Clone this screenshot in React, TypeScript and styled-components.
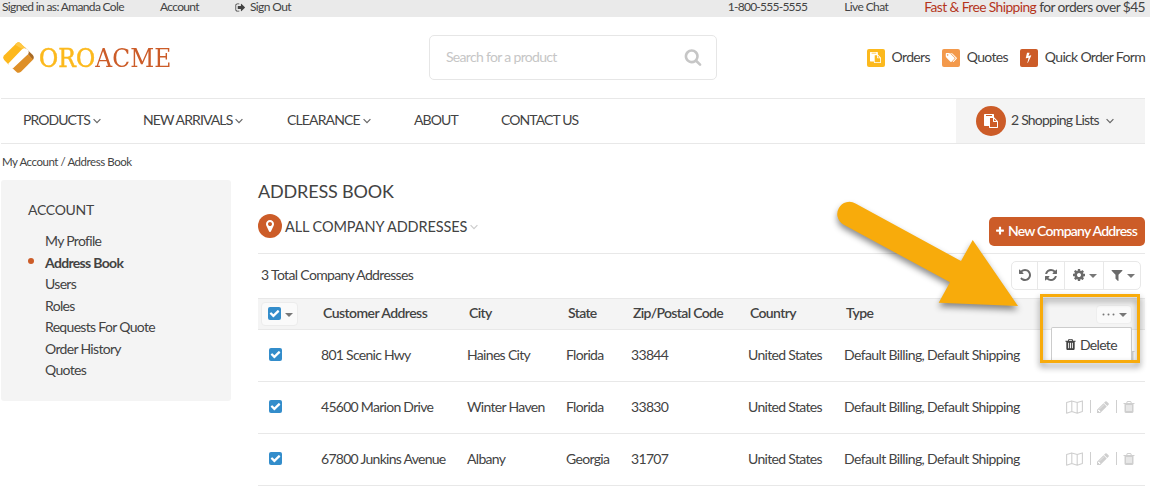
import React from "react";
import styled, { createGlobalStyle } from "styled-components";

const Global = createGlobalStyle`
  * { box-sizing: border-box; }
  body { margin: 0; background: #fff; overflow: hidden; }
`;

const brand = "#cc5c28";
const line = "#e8e8e8";

const Page = styled.div`
  position: relative;
  width: 1150px;
  height: 504px;
  overflow: hidden;
  background: #fff;
  color: #434343;
  font-family: Lato, "Liberation Sans", sans-serif;
  font-size: 14px;
  line-height: 16px;
  letter-spacing: -0.68px;
  white-space: nowrap;
`;

const Text = styled.span<{ $ls?: number; $mr?: number; $ml?: number }>`
  ${(p) => p.$ls !== undefined && `letter-spacing: ${p.$ls}px;`}
  margin-right: ${(p) => p.$mr ?? 0}px;
  margin-left: ${(p) => p.$ml ?? 0}px;
`;

const TopBar = styled.div`
  display: flex;
  align-items: center;
  justify-content: space-between;
  height: 17px;
  padding: 0 5px 3px 2px;
  background: #eaeaea;
  font-size: 12px;
  line-height: 14px;
  letter-spacing: -0.65px;
`;

const Group = styled.div`
  display: flex;
  align-items: center;
`;

const Promo = styled.span`
  font-size: 13.8px;
  line-height: 13px;
  margin-top: -1px;
  letter-spacing: -0.58px;
  em { font-style: normal; color: #b5351c; }
`;

const Header = styled.header`
  display: flex;
  align-items: center;
  height: 81px;
  padding: 0 5px 0 3px;
`;

const Logo = styled.div`
  display: flex;
  align-items: center;
  width: 426px;
  gap: 4px;
`;

const Wordmark = styled.span`
  display: inline-block;
  transform: scaleX(0.9);
  transform-origin: left center;
  font: 400 26px/32px "DejaVu Serif", serif;
  letter-spacing: 0.1px;
  color: ${brand};
  b { font-weight: 400; color: #fcb91d; -webkit-text-stroke: 0.5px #fcb91d; }
`;

const SearchBox = styled.div`
  display: flex;
  align-items: center;
  justify-content: space-between;
  width: 288px;
  height: 45px;
  padding: 0 14px 1px 16px;
  border: 1px solid #e6e6e6;
  border-radius: 5px;
  color: #c6c6c6;
`;

const QuickLinks = styled.div`
  display: flex;
  align-items: center;
  margin-left: auto;
  & > ${Text} { padding-bottom: 2px; }
`;

const Badge = styled.span<{ $color: string }>`
  display: flex;
  align-items: center;
  justify-content: center;
  width: 18px;
  height: 18px;
  margin-right: 7px;
  border-radius: 2px;
  background: ${(p) => p.$color};
  color: #fff;
`;

const Nav = styled.nav`
  display: flex;
  align-items: center;
  height: 46px;
  margin: 0 5px 0 1px;
  padding-left: 22px;
  border: solid ${line};
  border-width: 1px 0;
`;

const NavItem = styled.a<{ $w: number }>`
  display: flex;
  align-items: center;
  width: ${(p) => p.$w}px;
  gap: 3px;
  padding-bottom: 2px;
  & > svg { margin-top: 2px; }
`;

const Cart = styled.div`
  display: flex;
  align-items: center;
  width: 189px;
  height: 44px;
  margin-left: auto;
  padding-left: 20px;
  background: #f4f4f4;
  & > ${Text} { padding-bottom: 2px; }
`;

const Disc = styled.span<{ $size: number; $mr: number }>`
  display: flex;
  align-items: center;
  justify-content: center;
  width: ${(p) => p.$size}px;
  height: ${(p) => p.$size}px;
  margin-right: ${(p) => p.$mr}px;
  border-radius: 50%;
  background: ${brand};
  color: #fff;
`;

const Crumbs = styled.div`
  height: 36px;
  padding: 10px 0 0 2px;
  font-size: 11.5px;
  letter-spacing: -0.45px;
`;

const Body = styled.div`
  display: flex;
  align-items: flex-start;
  gap: 27px;
  padding: 0 5px 0 1px;
`;

const Sidebar = styled.aside`
  width: 230px;
  height: 221px;
  padding: 22px 0 0 27px;
  border-radius: 3px;
  background: #f4f4f4;
`;

const SideTitle = styled.div`
  height: 28px;
  letter-spacing: -0.3px;
`;

const SideItem = styled.div<{ $active?: boolean }>`
  display: flex;
  align-items: center;
  height: 21.6px;
  padding-left: 17px;
  padding-top: ${(p) => (p.$active ? 1 : 0)}px;
  font-weight: ${(p) => (p.$active ? 700 : 400)};
  &::before {
    content: "";
    display: ${(p) => (p.$active ? "block" : "none")};
    width: 6px;
    height: 6px;
    margin: -3px 11px 0 -17px;
    border-radius: 50%;
    background: ${brand};
  }
`;

const Main = styled.main`
  flex: 1;
`;

const Title = styled.h1`
  height: 32px;
  margin: 0;
  font-size: 18px;
  font-weight: 400;
  line-height: 23px;
  letter-spacing: -0.17px;
`;

const Heading = styled.div`
  display: flex;
  align-items: center;
  justify-content: space-between;
  height: 42px;
  border-bottom: 1px solid ${line};
`;

const View = styled.div`
  display: flex;
  align-items: center;
  margin-top: -14px;
  font-size: 14.5px;
  letter-spacing: -0.1px;
  & > ${Text}, & > ${Text} + svg { margin-top: 2px; }
`;

const Primary = styled.button`
  display: flex;
  align-items: center;
  justify-content: center;
  gap: 3px;
  width: 156px;
  height: 29px;
  margin-top: -3px;
  padding: 0 2px 0 0;
  border: 0;
  border-radius: 5px;
  background: ${brand};
  color: #fff;
  font: 600 14px/16px Lato, sans-serif;
  letter-spacing: -0.75px;
`;

const Summary = styled.div`
  display: flex;
  align-items: center;
  justify-content: space-between;
  height: 44px;
  padding: 0 4px 2px 3px;
`;

const Tools = styled.div`
  display: flex;
  width: 130px;
  height: 29px;
  border: 1px solid ${line};
  border-radius: 5px;
  color: #6a6a6a;
`;

const Tool = styled.span<{ $w: number }>`
  display: flex;
  align-items: center;
  justify-content: center;
  gap: 3px;
  width: ${(p) => p.$w}px;
  & + & { border-left: 1px solid ${line}; }
`;

const Caret = styled.i`
  width: 0;
  height: 0;
  margin-top: 2px;
  border: 4px solid transparent;
  border-top: 4px solid #777;
  border-bottom: 0;
`;

const Row = styled.div<{ $head?: boolean }>`
  display: grid;
  grid-template-columns: 63px 146px 99px 65px 117px 96px 1fr;
  align-items: center;
  height: ${(p) => (p.$head ? 32 : 52)}px;
  padding-bottom: 2px;
  border-bottom: 1px solid ${line};
  ${(p) =>
    p.$head &&
    `border-top: 1px solid ${line}; background: #f4f4f4; font-weight: 600; letter-spacing: -0.65px; & > span, & > div > span { padding-left: 2px; }`}
`;

const Check = styled.span`
  display: flex;
  align-items: center;
  justify-content: center;
  width: 13px;
  height: 13px;
  border-radius: 2px;
  background: #338dcb;
  color: #fff;
`;

const CheckCell = styled.div`
  padding-left: 11px;
`;

const MassSelect = styled.div`
  display: flex;
  align-items: center;
  gap: 4px;
  width: 37px;
  height: 24px;
  margin: 1px 0 0 3px;
  padding-left: 6px;
  border: 1px solid #ececec;
  border-radius: 4px;
  background: #fafafa;
  & > ${Check} { padding-left: 0; }
`;

const Actions = styled.div`
  display: flex;
  align-items: center;
  margin-left: auto;
  padding-right: 9px;
  color: #cfcfcf;
`;

const Divider = styled.i`
  width: 1px;
  height: 13px;
  margin: 0 5px 0 6px;
  background: #cfcfcf;
`;

const More = styled.div`
  display: flex;
  align-items: center;
  justify-content: center;
  gap: 4px;
  width: 36px;
  height: 19px;
  margin: 2px 13px 0 auto;
  border: 1px solid #eee;
  border-radius: 4px;
  background: #fafafa;
  color: #777;
`;

const Menu = styled.div`
  position: absolute;
  left: 1051px;
  top: 327px;
  display: flex;
  align-items: center;
  gap: 3px;
  width: 81px;
  height: 34px;
  padding: 0 0 0 12px;
  border: 1px solid #ccc;
  border-bottom: 0;
  border-radius: 2px 2px 0 0;
  background: #fff;
`;

const Frame = styled.div`
  position: absolute;
  left: 1040px;
  top: 294px;
  width: 100px;
  height: 69px;
  border: 3px solid #f8ab0b;
  filter: drop-shadow(0 4px 3px rgba(0, 0, 0, 0.45));
`;

const Arrow = styled.svg`
  position: absolute;
  left: 820px;
  top: 190px;
  filter: drop-shadow(0 4px 3px rgba(0, 0, 0, 0.45));
`;

const paths = {
  search:
    "M1216 832q0-185-131.5-316.5t-316.5-131.5-316.5 131.5-131.5 316.5 131.5 316.5 316.5 131.5 316.5-131.5 131.5-316.5zm512 832q0 52-38 90t-90 38q-54 0-90-38l-343-342q-179 124-399 124-143 0-273.5-55.5t-225-150-150-225-55.5-273.5 55.5-273.5 150-225 225-150 273.5-55.5 273.5 55.5 225 150 150 225 55.5 273.5q0 220-124 399l343 343q37 37 37 90z",
  pin: "M1152 640q0-106-75-181t-181-75-181 75-75 181 75 181 181 75 181-75 75-181zm256 0q0 109-33 179l-364 774q-16 33-47.5 52t-67.5 19-67.5-19-46.5-52l-365-774q-33-70-33-179 0-212 150-362t362-150 362 150 150 362z",
  plus: "M1600 736v192q0 40-28 68t-68 28h-416v416q0 40-28 68t-68 28h-192q-40 0-68-28t-28-68v-416h-416q-40 0-68-28t-28-68v-192q0-40 28-68t68-28h416v-416q0-40 28-68t68-28h192q40 0 68 28t28 68v416h416q40 0 68 28t28 68z",
  undo: "M1664 896q0 156-61 298t-164 245-245 164-298 61q-172 0-327-72.5t-264-204.5q-7-10-6.5-22.5t8.5-20.5l137-138q10-9 25-9 16 2 23 12 73 95 179 147t225 52q104 0 198.5-40.5t163.5-109.5 109.5-163.5 40.5-198.5-40.5-198.5-109.5-163.5-163.5-109.5-198.5-40.5q-98 0-188 35.5t-160 101.5l137 138q31 30 14 69-17 40-59 40h-448q-26 0-45-19t-19-45v-448q0-42 40-59 39-17 69 14l130 129q107-101 244.5-156.5t284.5-55.5q156 0 298 61t245 164 164 245 61 298z",
  refresh:
    "M1639 1056q0 5-1 7-64 268-268 434.5t-478 166.5q-146 0-282.5-55t-243.5-157l-129 129q-19 19-45 19t-45-19-19-45v-448q0-26 19-45t45-19h448q26 0 45 19t19 45-19 45l-137 137q71 66 161 102t187 36q134 0 250-65t186-179q11-17 53-117 8-23 30-23h192q13 0 22.5 9.5t9.5 22.5zm25-800v448q0 26-19 45t-45 19h-448q-26 0-45-19t-19-45 19-45l138-138q-148-137-349-137-134 0-250 65t-186 179q-11 17-53 117-8 23-30 23h-199q-13 0-22.5-9.5t-9.5-22.5v-7q65-268 270-434.5t480-166.5q146 0 284 55.5t245 156.5l130-129q19-19 45-19t45 19 19 45z",
  cog: "M1152 896q0-106-75-181t-181-75-181 75-75 181 75 181 181 75 181-75 75-181zm512-109v222q0 12-8 23t-20 13l-185 28q-19 54-39 91 35 50 107 138 10 12 10 25t-9 23q-27 37-99 108t-94 71q-12 0-26-9l-138-108q-44 23-91 38-16 136-29 186-7 28-36 28h-222q-14 0-24.5-8.5t-11.5-21.5l-28-184q-49-16-90-37l-141 107q-10 9-25 9-14 0-25-11-126-114-165-168-7-10-7-23 0-12 8-23 15-21 51-66.5t54-70.5q-27-50-41-99l-183-27q-13-2-21-12.5t-8-23.5v-222q0-12 8-23t19-13l186-28q14-46 39-92-40-57-107-138-10-12-10-24 0-10 9-23 26-36 98.5-107.5t94.5-71.5q13 0 26 10l138 107q44-23 91-38 16-136 29-186 7-28 36-28h222q14 0 24.5 8.5t11.5 21.5l28 184q49 16 90 37l142-107q9-9 24-9 13 0 25 10 129 119 165 170 7 8 7 22 0 12-8 23-15 21-51 66.5t-54 70.5q26 50 41 98l183 28q13 2 21 12.5t8 23.5z",
  filter:
    "M1595 295q17 41-14 70l-493 493v742q0 42-39 59-13 5-25 5-27 0-45-19l-256-256q-19-19-19-45v-486l-493-493q-31-29-14-70 17-39 59-39h1280q42 0 59 39z",
  trash:
    "M704 1376v-704q0-14-9-23t-23-9h-64q-14 0-23 9t-9 23v704q0 14 9 23t23 9h64q14 0 23-9t9-23zm256 0v-704q0-14-9-23t-23-9h-64q-14 0-23 9t-9 23v704q0 14 9 23t23 9h64q14 0 23-9t9-23zm256 0v-704q0-14-9-23t-23-9h-64q-14 0-23 9t-9 23v704q0 14 9 23t23 9h64q14 0 23-9t9-23zm-544-992h448l-48-117q-7-9-17-11h-317q-10 2-17 11zm928 32v64q0 14-9 23t-23 9h-96v948q0 83-47 143.5t-113 60.5h-832q-66 0-113-58.5t-47-141.5v-952h-96q-14 0-23-9t-9-23v-64q0-14 9-23t23-9h309l70-167q15-37 54-63t79-26h320q40 0 79 26t54 63l70 167h309q14 0 23 9t9 23z",
  pencil:
    "M491 1536l91-91-235-235-91 91v107h128v128h107zm523-928q0-22-22-22-10 0-17 7l-542 542q-7 7-7 17 0 22 22 22 10 0 17-7l542-542q7-7 7-17zm-54-192l416 416-832 832h-416v-416zm683 96q0 53-37 90l-166 166-416-416 166-165q36-38 90-38 53 0 91 38l235 234q37 39 37 91z",
  paste:
    "M768 1664h896v-640h-416q-40 0-68-28t-28-68v-416h-384v1152zm256-1440v-64q0-13-9.5-22.5t-22.5-9.5h-704q-13 0-22.5 9.5t-9.5 22.5v64q0 13 9.5 22.5t22.5 9.5h704q13 0 22.5-9.5t9.5-22.5zm256 672h299l-299-299v299zm512 128v672q0 40-28 68t-68 28h-960q-40 0-68-28t-28-68v-160h-544q-40 0-68-28t-28-68v-1344q0-40 28-68t68-28h1088q40 0 68 28t28 68v328q21 13 36 28l408 408q28 28 48 76t20 88z",
  tags: "M576 448q0-53-37.5-90.5t-90.5-37.5-90.5 37.5-37.5 90.5 37.5 90.5 90.5 37.5 90.5-37.5 37.5-90.5zm1067 576q0 53-37 90l-491 492q-39 37-91 37-53 0-90-37l-715-716q-38-37-64.5-101t-26.5-117v-416q0-52 38-90t90-38h416q53 0 117 26.5t102 64.5l715 714q37 39 37 91zm384 0q0 53-37 90l-491 492q-39 37-91 37-36 0-59-14t-53-45l470-470q37-37 37-90 0-52-37-91l-715-714q-38-38-102-64.5t-117-26.5h224q53 0 117 26.5t102 64.5l715 714q37 39 37 91z",
  bolt: "M1333 566q18 20 7 44l-540 1157q-13 25-42 25-4 0-14-2-17-5-25.5-19t-4.5-30l197-808-406 101q-4 1-12 1-18 0-31-11-18-15-13-39l201-825q4-16 16.5-26.5t28.5-10.5h328q19 0 32 12.5t13 29.5q0 8-5 18l-171 463 396-98q8-2 12-2 19 0 34 15z",
  signOut:
    "M704 1440q0 4 1 20t.5 26.5-3 23.5-10 19.5-20.5 6.5h-320q-119 0-203.5-84.5t-84.5-203.5v-704q0-119 84.5-203.5t203.5-84.5h320q13 0 22.5 9.5t9.5 22.5q0 4 1 20t.5 26.5-3 23.5-10 19.5-20.5 6.5h-320q-66 0-113 47t-47 113v704q0 66 47 113t113 47h312l11.5 1 11.5 3 8 5.5 7 9 2 13.5zm928-544q0 26-19 45l-544 544q-19 19-45 19t-45-19-19-45v-288h-448q-26 0-45-19t-19-45v-384q0-26 19-45t45-19h448v-288q0-26 19-45t45-19 45 19l544 544q19 19 19 45z",
  check:
    "M1671 566q0 40-28 68l-724 724-136 136q-28 28-68 28t-68-28l-136-136-362-362q-28-28-28-68t28-68l136-136q28-28 68-28t68 28l294 295 656-657q28-28 68-28t68 28l136 136q28 28 28 68z",
};

const Glyph = styled.svg<{ $ml?: number; $mr?: number }>`
  flex: none;
  display: block;
  fill: currentColor;
  margin-left: ${(p) => p.$ml ?? 0}px;
  margin-right: ${(p) => p.$mr ?? 0}px;
`;

type IconProps = {
  name: keyof typeof paths;
  size: number;
  box?: string;
  width?: number;
  mr?: number;
};

const Icon = ({ name, size, box = "0 0 1792 1792", width, mr }: IconProps) => (
  <Glyph width={width ?? size} height={size} viewBox={box} $mr={mr}>
    <path d={paths[name]} />
  </Glyph>
);

const Angle = ({ color = "#666", ml = 0 }: { color?: string; ml?: number }) => (
  <Glyph width="8" height="6" viewBox="0 0 8 6" $ml={ml}>
    <path d="M0.6 1.2L4 4.6L7.4 1.2" fill="none" stroke={color} strokeWidth="1.2" />
  </Glyph>
);

const MapIcon = () => (
  <Glyph width="17" height="14" viewBox="0 0 17 14" $mr={1}>
    <path
      d="M.6 2.6L5.8.9v10.6L.6 13.2zM5.8.9l5.4 1.7v10.6l-5.4-1.7zM11.2 2.6L16.4.9v10.6l-5.2 1.7z"
      fill="none"
      stroke="currentColor"
      strokeWidth="1.1"
      strokeLinejoin="round"
    />
  </Glyph>
);

const LogoMark = () => (
  <Glyph width="32" height="31" viewBox="0 0 32 31">
    <path d="M1.2 13.2L13.5 1.2Q15.500 -.6 17.500 1.200L23 6.500L5.500 22.500L1.200 18Q-.8 15.600 1.200 13.200Z" fill="#fdb81c" />
    <path d="M13.500 1.200Q15.500 -.6 17.500 1.200L23 6.500L18.500 6.500L12 2.700Z" fill="#ffc845" />
    <path d="M22 5.500L29.800 13Q31.800 15.300 29.800 18L24 11Z" fill="#a86a25" />
    <path d="M24.500 12L30.200 17.500L18 29.800Q15.500 31.800 13.500 30L9 25.800Z" fill="#de8f27" />
    <path d="M18.800 7.500Q21.500 5.200 24 7.200Q26.800 9.400 25.200 12L9.800 26.500L5.200 21.800Z" fill="#fff" />
  </Glyph>
);

const rows = [
  ["801 Scenic Hwy", "Haines City", "Florida", "33844"],
  ["45600 Marion Drive", "Winter Haven", "Florida", "33830"],
  ["67800 Junkins Avenue", "Albany", "Georgia", "31707"],
];

const sideItems = ["My Profile", "Address Book", "Users", "Roles", "Requests For Quote", "Order History", "Quotes"];

const Checked = () => (
  <Check>
    <Icon name="check" size={11} />
  </Check>
);

export default function App() {
  return (
    <Page>
      <Global />
      <TopBar>
        <Group>
          <Text $mr={36}>Signed in as: Amanda Cole</Text>
          <Text $mr={36}>Account</Text>
          <Icon name="signOut" size={11} mr={4} />
          <Text $ls={-0.6}>Sign Out</Text>
        </Group>
        <Group>
          <Text $mr={37} $ls={-0.75}>1-800-555-5555</Text>
          <Text $mr={36} $ls={-0.6}>Live Chat</Text>
          <Promo>
            <em>Fast &amp; Free Shipping</em> for orders over $45
          </Promo>
        </Group>
      </TopBar>

      <Header>
        <Logo>
          <LogoMark />
          <Wordmark>
            <b>ORO</b>ACME
          </Wordmark>
        </Logo>
        <SearchBox>
          <Text>Search for a product</Text>
          <Icon name="search" size={18} />
        </SearchBox>
        <QuickLinks>
          <Badge $color="#fcb91d">
            <Icon name="paste" size={11} />
          </Badge>
          <Text $mr={12}>Orders</Text>
          <Badge $color="#f3994b">
            <Icon name="tags" size={11} width={12} box="0 0 2048 1792" />
          </Badge>
          <Text $mr={12}>Quotes</Text>
          <Badge $color={brand}>
            <Icon name="bolt" size={11} />
          </Badge>
          <Text>Quick Order Form</Text>
        </QuickLinks>
      </Header>

      <Nav>
        <NavItem $w={120}>
          <Text $ls={-0.95}>PRODUCTS</Text>
          <Angle />
        </NavItem>
        <NavItem $w={144}>
          <Text $ls={-0.9}>NEW ARRIVALS</Text>
          <Angle />
        </NavItem>
        <NavItem $w={127}>
          <Text $ls={-0.85}>CLEARANCE</Text>
          <Angle />
        </NavItem>
        <NavItem $w={87}>
          <Text $ls={-0.9}>ABOUT</Text>
        </NavItem>
        <NavItem $w={90}>
          <Text $ls={-0.9}>CONTACT US</Text>
        </NavItem>
        <Cart>
          <Disc $size={30} $mr={5}>
            <Icon name="paste" size={14} />
          </Disc>
          <Text $ls={-0.78}>2 Shopping Lists</Text>
          <Angle ml={7} />
        </Cart>
      </Nav>

      <Crumbs>My Account / Address Book</Crumbs>

      <Body>
        <Sidebar>
          <SideTitle>ACCOUNT</SideTitle>
          {sideItems.map((item) => (
            <SideItem key={item} $active={item === "Address Book"}>
              {item}
            </SideItem>
          ))}
        </Sidebar>

        <Main>
          <Title>ADDRESS BOOK</Title>
          <Heading>
            <View>
              <Disc $size={24} $mr={3}>
                <Icon name="pin" size={14} />
              </Disc>
              <Text>ALL COMPANY ADDRESSES</Text>
              <Angle color="#ccc" ml={3} />
            </View>
            <Primary>
              <Icon name="plus" size={10} />
              New Company Address
            </Primary>
          </Heading>
          <Summary>
            <Text $ls={-0.65}>3 Total Company Addresses</Text>
            <Tools>
              <Tool $w={25}>
                <Icon name="undo" size={14} />
              </Tool>
              <Tool $w={27}>
                <Icon name="refresh" size={14} />
              </Tool>
              <Tool $w={39}>
                <Icon name="cog" size={14} />
                <Caret />
              </Tool>
              <Tool $w={37}>
                <Icon name="filter" size={14} />
                <Caret />
              </Tool>
            </Tools>
          </Summary>

          <Row $head>
            <MassSelect>
              <Checked />
              <Caret />
            </MassSelect>
            <Text $ls={-0.55}>Customer Address</Text>
            <Text>City</Text>
            <Text>State</Text>
            <Text>Zip/Postal Code</Text>
            <Text>Country</Text>
            <Group>
              <Text>Type</Text>
              <More>
                <Glyph width="13" height="3" viewBox="0 0 13 3">
                  <circle cx="1.5" cy="1.5" r="1" />
                  <circle cx="6.5" cy="1.5" r="1" />
                  <circle cx="11.5" cy="1.5" r="1" />
                </Glyph>
                <Caret />
              </More>
            </Group>
          </Row>
          {rows.map(([address, city, state, zip]) => (
            <Row key={address}>
              <CheckCell>
                <Checked />
              </CheckCell>
              <Text $ls={-0.72}>{address}</Text>
              <Text>{city}</Text>
              <Text>{state}</Text>
              <Text>{zip}</Text>
              <Text>United States</Text>
              <Group>
                <Text $ls={-0.61}>Default Billing, Default Shipping</Text>
                <Actions>
                  <MapIcon />
                  <Divider />
                  <Icon name="pencil" size={14} />
                  <Divider />
                  <Icon name="trash" size={14} />
                </Actions>
              </Group>
            </Row>
          ))}
        </Main>
      </Body>

      <Menu>
        <Icon name="trash" size={13} />
        <Text>Delete</Text>
      </Menu>
      <Frame />
      <Arrow width="220" height="140" viewBox="0 0 220 140">
        <path
          d="M35.5 13.5L141 71L152.7 50L198 116L118.700 112.700L130 92.300L23.300 34.500A12 12 0 0 1 35.500 13.500Z"
          fill="#f8ab0b"
        />
      </Arrow>
    </Page>
  );
}
